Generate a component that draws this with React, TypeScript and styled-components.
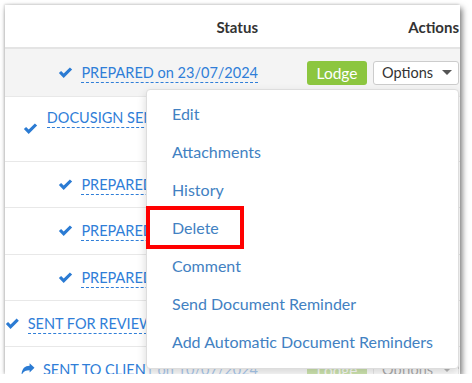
import styled, { createGlobalStyle } from 'styled-components'

const GlobalStyle = createGlobalStyle`
  body {
    margin: 0;
    background: #fff;
    font-family: 'Lato', 'Open Sans', sans-serif;
  }
`

const Frame = styled.div`
  position: relative;
  margin: 5px 0 0 5px;
  width: 455px;
  height: 369px;
  overflow: hidden;
  background: #fff;
  box-shadow: 2px 3px 6px rgba(0, 0, 0, 0.55), -1px -1px 2px rgba(0, 0, 0, 0.12);
`

const Row = styled.div<{ $h: number; $head?: boolean; $active?: boolean }>`
  display: grid;
  grid-template-columns: 253px 1fr;
  align-items: center;
  height: ${(p) => p.$h}px;
  box-sizing: border-box;
  border-bottom: ${(p) => (p.$head ? '2px solid #e4e4e4' : '1px solid #e8e8e8')};
  background: ${(p) => (p.$active ? '#f4f4f4' : '#fff')};
`

const HeadCell = styled.div<{ $right?: boolean }>`
  text-align: right;
  font-size: 15px;
  font-weight: 700;
  color: #333;
  padding-top: 2px;
  padding-right: ${(p) => (p.$right ? '1px' : '0')};
`

const StatusCell = styled.div`
  display: flex;
  justify-content: flex-end;
  align-items: center;
  gap: 8px;
`

const StatusText = styled.span<{ $wide?: boolean }>`
  color: #2f7ed8;
  font-size: 14.5px;
  line-height: 22px;
  text-align: right;
  max-width: ${(p) => (p.$wide ? '212px' : 'none')};
  white-space: ${(p) => (p.$wide ? 'normal' : 'nowrap')};
  span {
    border-bottom: 1px dashed #2f7ed8;
    padding-bottom: 1px;
  }
`

const Actions = styled.div`
  display: flex;
  justify-content: flex-end;
  gap: 6px;
  padding-right: 1px;
`

const LodgeBtn = styled.button`
  width: 60px;
  height: 24px;
  border: none;
  border-radius: 3px;
  background: #8cc63f;
  color: #fff;
  font-family: inherit;
  font-size: 15.5px;
  padding: 0;
`

const OptionsBtn = styled.button`
  display: flex;
  align-items: center;
  justify-content: center;
  gap: 9px;
  width: 86px;
  height: 24px;
  border: 1px solid #ccc;
  border-radius: 3px;
  background: #fff;
  color: #333;
  font-family: inherit;
  font-size: 14.5px;
  padding: 0 0 0 2px;
`

const Caret = styled.i`
  width: 0;
  height: 0;
  border-left: 5px solid transparent;
  border-right: 5px solid transparent;
  border-top: 5px solid #555;
`

const Menu = styled.ul`
  position: absolute;
  left: 141px;
  top: 84px;
  width: 313px;
  height: 280px;
  box-sizing: border-box;
  margin: 0;
  padding: 5px 0 0;
  list-style: none;
  background: #fff;
  border: 1px solid #ddd;
  border-radius: 4px;
  box-shadow: 0 4px 10px rgba(0, 0, 0, 0.16);
`

const MenuItem = styled.li`
  height: 38px;
  line-height: 38px;
  padding-left: 25px;
  color: #4281c2;
  font-size: 16px;
`

const Fade = styled.div`
  position: absolute;
  left: 141px;
  right: 0;
  top: 364px;
  bottom: 0;
  background: rgba(255, 255, 255, 0.6);
`

const Highlight = styled.div`
  position: absolute;
  left: 141px;
  top: 201px;
  width: 98px;
  height: 43px;
  box-sizing: border-box;
  border: 4px solid #ff0000;
`

const Check = () => (
  <svg width="15" height="12" viewBox="0 0 14 11">
    <path d="M0.8 5.6 L2.9 3.6 L5.3 6 L11.1 0.3 L13.2 2.3 L5.3 10.2 Z" fill="#2b7bd3" />
  </svg>
)

const Share = () => (
  <svg width="14" height="13" viewBox="0 0 14 13">
    <path d="M13.5 4.8 L8.6 0.3 V2.8 C3.5 3 0.6 6 0.5 12.5 C2 8.6 4.5 7.2 8.6 7.2 V9.6 Z" fill="#2b7bd3" />
  </svg>
)

type Item = { h: number; text: string; date: string; icon?: 'share'; wide?: boolean; active?: boolean }

const rows: Item[] = [
  { h: 48, text: 'PREPARED', date: '23/07/2024', active: true },
  { h: 65, text: 'DOCUSIGN SENT TO CLIENT', date: '23/07/2024', wide: true },
  { h: 46, text: 'PREPARED', date: '22/07/2024' },
  { h: 47, text: 'PREPARED', date: '22/07/2024' },
  { h: 46, text: 'PREPARED', date: '11/07/2024' },
  { h: 46, text: 'SENT FOR REVIEW', date: '11/07/2024' },
  { h: 46, text: 'SENT TO CLIENT', date: '10/07/2024', icon: 'share' },
]

const menu = [
  'Edit',
  'Attachments',
  'History',
  'Delete',
  'Comment',
  'Send Document Reminder',
  'Add Automatic Document Reminders',
]

export default function App() {
  return (
    <>
      <GlobalStyle />
      <Frame>
        <Row $h={44} $head>
          <HeadCell>Status</HeadCell>
          <HeadCell $right>Actions</HeadCell>
        </Row>
        {rows.map((r, i) => (
          <Row key={i} $h={r.h} $active={r.active}>
            <StatusCell>
              {r.icon === 'share' ? <Share /> : <Check />}
              <StatusText $wide={r.wide}>
                <span>
                  {r.text} on {r.date}
                </span>
              </StatusText>
            </StatusCell>
            <Actions>
              <LodgeBtn>Lodge</LodgeBtn>
              <OptionsBtn>
                Options <Caret />
              </OptionsBtn>
            </Actions>
          </Row>
        ))}
        <Fade />
        <Menu>
          {menu.map((m) => (
            <MenuItem key={m}>{m}</MenuItem>
          ))}
        </Menu>
        <Highlight />
      </Frame>
    </>
  )
}
